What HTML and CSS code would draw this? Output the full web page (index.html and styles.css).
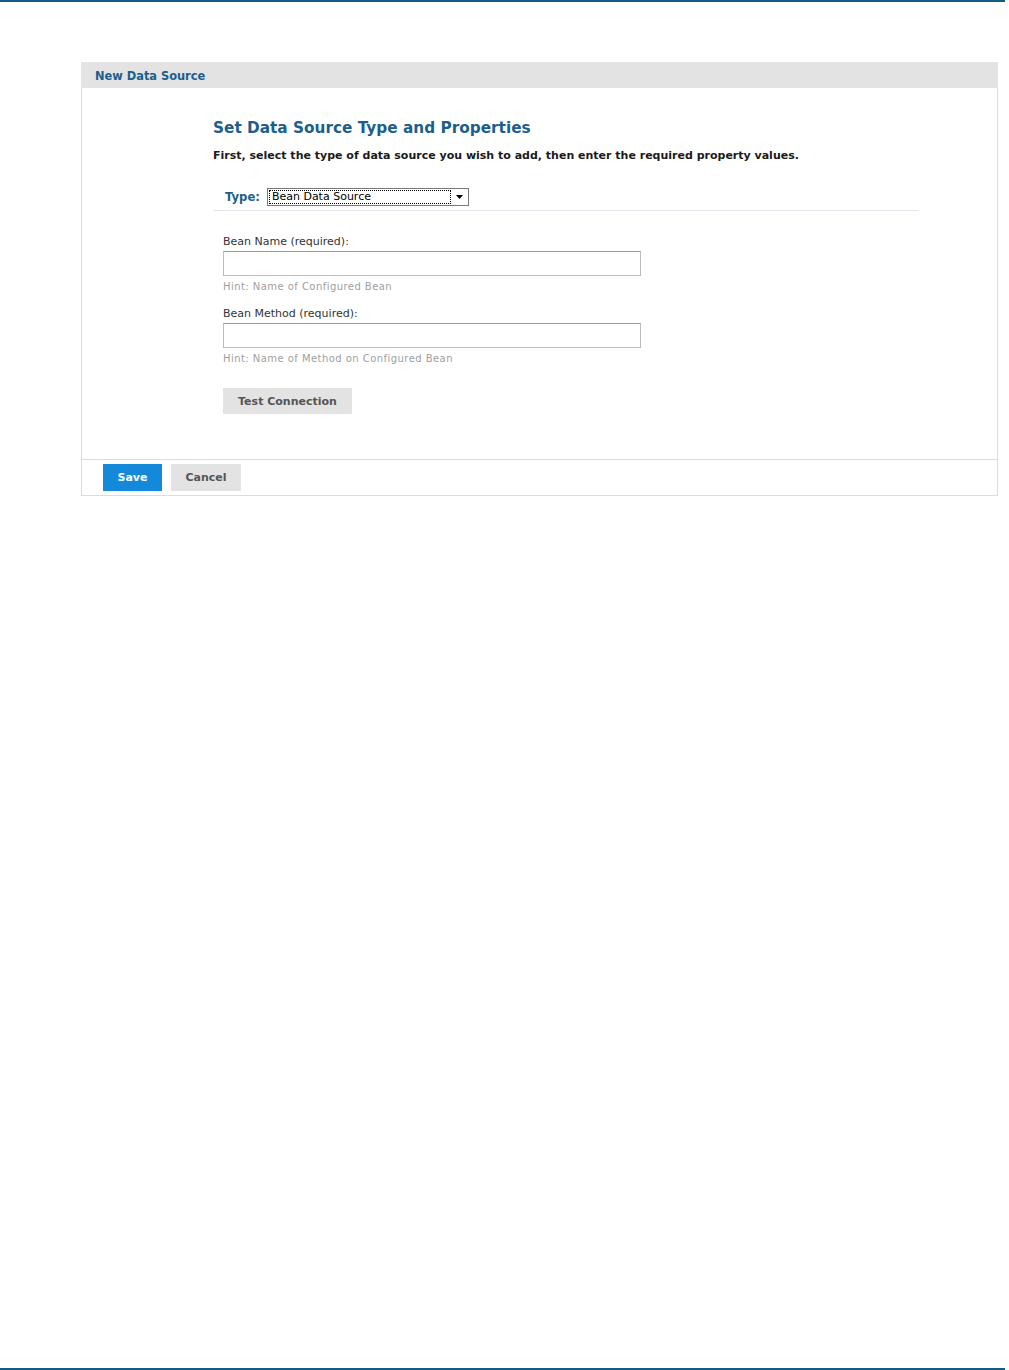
FILE: index.html
```html
<!DOCTYPE html>
<html>
<head>
<meta charset="utf-8">
<link rel="stylesheet" href="styles.css">
</head>
<body>
<div class="topline"></div>
<div class="page">
  <div class="panel">
    <div class="panel-head">New Data Source</div>
    <div class="panel-body">
      <h1 class="title">Set Data Source Type and Properties</h1>
      <p class="intro">First, select the type of data source you wish to add, then enter the required property values.</p>
      <div class="type-row">
        <span class="type-label">Type:</span>
        <div class="select">
          <span class="select-value">Bean Data Source</span>
          <span class="select-arrow"><svg width="7" height="4" viewBox="0 0 7 4"><path d="M0 0H7L3.5 4Z" fill="#000"/></svg></span>
        </div>
      </div>
      <div class="fields">
        <div class="field">
          <label class="field-label">Bean Name (required):</label>
          <div class="input"></div>
          <div class="hint">Hint: Name of Configured Bean</div>
        </div>
        <div class="field">
          <label class="field-label">Bean Method (required):</label>
          <div class="input"></div>
          <div class="hint">Hint: Name of Method on Configured Bean</div>
        </div>
        <div class="btn btn-gray btn-test">Test Connection</div>
      </div>
    </div>
    <div class="panel-foot">
      <div class="btn btn-blue">Save</div>
      <div class="btn btn-gray">Cancel</div>
    </div>
  </div>
</div>
<div class="bottomline"></div>
</body>
</html>
```

FILE: styles.css
```css
html, body {
  margin: 0;
  padding: 0;
  background: #fff;
  font-family: "DejaVu Sans", Verdana, sans-serif;
  color: #222;
}
body {
  width: 1009px;
  height: 1370px;
  position: relative;
}
.topline {
  width: 1005px;
  height: 2px;
  background: #135a84;
}
.bottomline {
  position: absolute;
  left: 0;
  top: 1368px;
  width: 1005px;
  height: 2px;
  background: #135a84;
}
.page {
  padding: 60px 0 0 81px;
}
.panel {
  width: 915px;
  border: 1px solid #dcdcdc;
  border-top: none;
}
.panel-head {
  background: #e3e3e3;
  height: 26px;
  line-height: 28px;
  padding-left: 14px;
  margin: 0 -1px;
  font-size: 11.4px;
  font-weight: bold;
  color: #1d5f8c;
}
.panel-body {
  padding: 30px 0 45px 131px;
  border-bottom: 1px solid #dcdcdc;
}
.title {
  margin: 0;
  font-size: 15.3px;
  line-height: 20px;
  font-weight: bold;
  color: #1d5f8c;
}
.intro {
  margin: 11px 0 0;
  font-size: 11px;
  line-height: 14px;
  font-weight: bold;
  color: #1a1a1a;
}
.type-row {
  margin-top: 25px;
  width: 694px;
  height: 22px;
  display: flex;
  align-items: flex-start;
  border-bottom: 1px solid #e1e7ed;
  padding-left: 12px;
  box-sizing: content-box;
}
.type-label {
  font-size: 11.6px;
  font-weight: bold;
  color: #1d5f8c;
  line-height: 19px;
  margin-right: 7px;
}
.select {
  width: 202px;
  height: 18px;
  border: 1px solid #7a7a7a;
  box-sizing: border-box;
  display: flex;
  background: #fff;
}
.select-value {
  flex: 1;
  border: 1px dotted #000;
  margin: 1px;
  font-family: "DejaVu Sans", Verdana, sans-serif;
  font-size: 11px;
  line-height: 12px;
  padding-left: 2px;
  color: #000;
}
.select-arrow {
  width: 16px;
  display: flex;
  align-items: center;
  justify-content: center;
}
.fields {
  padding-left: 10px;
  padding-top: 24px;
}
.field {
  margin-bottom: 14px;
}
.field-label {
  display: block;
  font-size: 11px;
  line-height: 14px;
  color: #333;
}
.input {
  margin-top: 2px;
  width: 418px;
  height: 25px;
  box-sizing: border-box;
  border: 1px solid #bdbdbd;
  border-top-color: #9a9a9a;
}
.hint {
  margin-top: 4px;
  font-size: 10px;
  line-height: 13px;
  color: #a0a0a0;
  letter-spacing: 0.45px;
}
.btn {
  display: inline-flex;
  align-items: center;
  justify-content: center;
  height: 26px;
  font-size: 11px;
  font-weight: bold;
}
.btn-gray {
  background: #e3e3e3;
  color: #555;
}
.btn-blue {
  background: #1589d9;
  color: #fff;
}
.btn-test {
  margin-top: 9px;
  width: 129px;
}
.panel-foot {
  display: flex;
  gap: 9px;
  padding: 4px 0 4px 21px;
}
.panel-foot .btn {
  height: 27px;
}
.panel-foot .btn-blue {
  width: 59px;
}
.panel-foot .btn-gray {
  width: 70px;
}
```
